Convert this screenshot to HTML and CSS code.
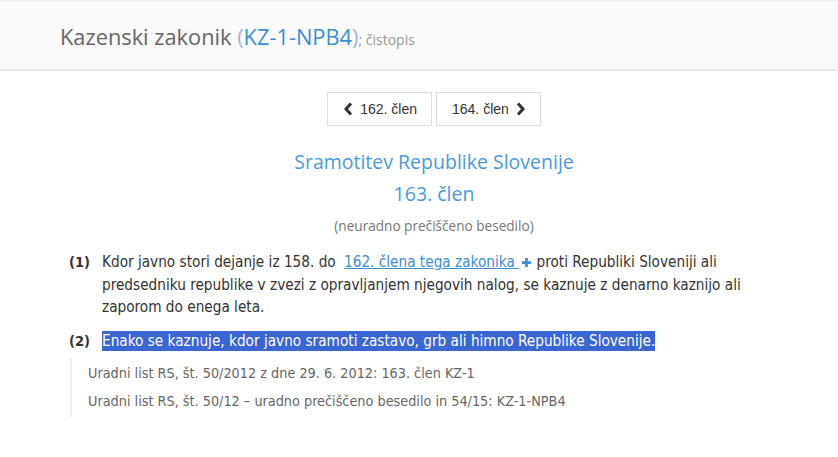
FILE: index.html
```html
<!DOCTYPE html>
<html lang="sl">
<head>
<meta charset="utf-8">
<title>Kazenski zakonik</title>
<link rel="stylesheet" href="styles.css">
</head>
<body>
<header class="topbar">
  <h1 class="title">Kazenski zakonik <span class="paren">(</span><span class="abbr">KZ-1-NPB4</span><span class="paren">)</span><span class="sub">; čistopis</span></h1>
</header>
<main class="content">
  <nav class="pager">
    <a class="btn" href="#"><svg class="chev" viewBox="0 0 10 14" width="10" height="14"><path d="M8 1.5 L3 7 L8 12.5" fill="none" stroke="#333" stroke-width="3"/></svg>162. člen</a>
    <a class="btn" href="#">164. člen<svg class="chev" viewBox="0 0 10 14" width="10" height="14"><path d="M2 1.5 L7 7 L2 12.5" fill="none" stroke="#333" stroke-width="3"/></svg></a>
  </nav>
  <h2 class="art-title">Sramotitev Republike Slovenije</h2>
  <h3 class="art-num">163. člen</h3>
  <p class="note">(neuradno prečiščeno besedilo)</p>
  <div class="para">
    <span class="num">(1)</span>
    <p class="text">Kdor javno stori dejanje iz 158. do <a class="ref" href="#">162. člena tega zakonika </a><svg class="plus" viewBox="0 0 12 12" width="11" height="11"><path d="M6 1v10M1 6h10" stroke="#3d8fd4" stroke-width="3"/></svg> proti Republiki Sloveniji ali predsedniku republike v zvezi z opravljanjem njegovih nalog, se kaznuje z denarno kaznijo ali zaporom do enega leta.</p>
  </div>
  <div class="para">
    <span class="num">(2)</span>
    <p class="text"><mark class="sel">Enako se kaznuje, kdor javno sramoti zastavo, grb ali himno Republike Slovenije.</mark></p>
  </div>
  <div class="sources">
    <p>Uradni list RS, št. 50/2012 z dne 29. 6. 2012: 163. člen KZ-1</p>
    <p>Uradni list RS, št. 50/12 – uradno prečiščeno besedilo in 54/15: KZ-1-NPB4</p>
  </div>
</main>
</body>
</html>
```
FILE: styles.css
```css
html, body { margin: 0; padding: 0; background: #fff; }
body { font-family: "DejaVu Sans Condensed", "DejaVu Sans", sans-serif; color: #333; }
.topbar {
  height: 71px;
  background: #fafafa;
  border-top: 1px solid #eeeeee;
  border-bottom: 2px solid #e9e9e9;
  box-sizing: border-box;
  display: flex;
  align-items: center;
  padding-left: 60px;
  padding-top: 2px;
}
.title {
  margin: 0;
  font-family: "Open Sans", sans-serif;
  font-weight: 400;
  font-size: 21.8px;
  color: #666;
}
.paren { color: #aab4d4; }
.abbr { color: #3d8fd4; }
.sub { font-size: 14px; color: #999; }
.content { padding: 0 0 0 69px; width: 730px; }
.pager { display: flex; justify-content: center; gap: 4px; margin-top: 21px; }
.btn {
  display: flex; align-items: center; gap: 7px;
  height: 34px; box-sizing: border-box;
  padding: 0 14px 0 15px;
  border: 1px solid #ddd;
  font-family: "Liberation Sans", Arial, sans-serif;
  font-size: 14px; color: #333;
  text-decoration: none;
}
.art-title {
  margin: 20px 0 0; text-align: center;
  font-family: "Open Sans", sans-serif; font-weight: 400;
  font-size: 19.5px; color: #4a9ad8; line-height: 32px;
}
.art-num {
  margin: 0; text-align: center;
  font-family: "Open Sans", sans-serif; font-weight: 400;
  font-size: 19.5px; color: #4a9ad8; line-height: 32px;
}
.note {
  margin: 6px 0 0; text-align: center;
  font-family: "Open Sans", sans-serif;
  font-size: 13.6px; color: #777; line-height: 20px;
}
.para { display: flex; margin-top: 13px; padding-top: 2px; }
.para + .para { margin-top: 9px; }
.num { width: 33px; flex: none; font-weight: bold; font-size: 14.5px; line-height: 22.5px; color: #333; }
.text { margin: 0; max-width: 685px; font-size: 15.2px; line-height: 22.5px; color: #333; }
.ref { color: #3d8fd4; text-decoration: underline; margin-left: 4px; }
.plus { vertical-align: -1px; margin-left: 2px; }
.sel { background: #3a66d4; color: #fff; padding: 1px 0; }
.sources {
  margin: 6px 0 0 1px;
  border-left: 2px solid #eee;
  padding: 1px 0 2px 16px;
}
.sources p { margin: 0; font-size: 14.3px; line-height: 28px; color: #666; }
```
